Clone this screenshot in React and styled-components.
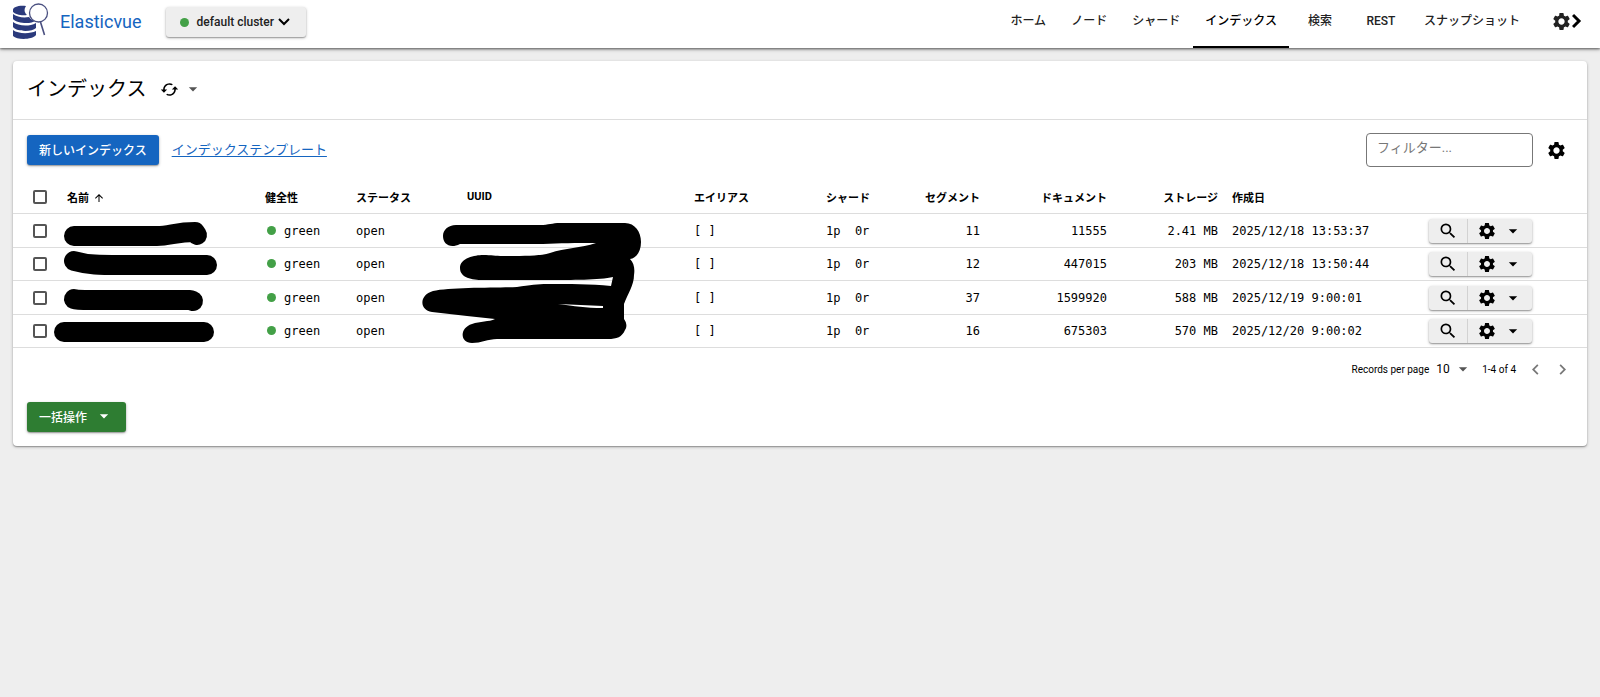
import React from "react";
import styled, { createGlobalStyle } from "styled-components";
import {
  MdArrowDropDown,
  MdArrowUpward,
  MdCached,
  MdChevronLeft,
  MdChevronRight,
  MdSearch,
  MdSettings,
} from "react-icons/md";

const GlobalStyle = createGlobalStyle`
  * {
    box-sizing: border-box;
  }

  body {
    margin: 0;
    background-color: #eeeeee;
    color: #000;
    font-family: Roboto, "Noto Sans CJK JP", sans-serif;
    font-size: 13px;
  }

  button,
  input,
  select {
    font-family: inherit;
    color: inherit;
  }

  button {
    cursor: pointer;
  }
`;

const raised = "0 1px 3px rgba(0, 0, 0, 0.3), 0 1px 1px rgba(0, 0, 0, 0.2)";

const Header = styled.header`
  display: flex;
  align-items: center;
  height: 48px;
  padding: 0 18px 0 12px;
  background-color: #fff;
  box-shadow: 0 1px 4px rgba(0, 0, 0, 0.4), 0 1px 2px rgba(0, 0, 0, 0.4);
`;

const Brand = styled.a`
  display: flex;
  align-items: center;
  gap: 11px;
  height: 42px;
  align-self: flex-start;
  color: #1565c0;
  font-size: 18px;
  text-decoration: none;
`;

const ClusterButton = styled.button`
  display: flex;
  align-items: center;
  align-self: flex-start;
  width: 140px;
  height: 30px;
  margin: 7px 0 0 24px;
  padding: 0 14px;
  border: 0;
  border-radius: 3px;
  background-color: #eeeeee;
  box-shadow: ${raised};
  color: #222;
  font-size: 12px;
  font-weight: 500;
  white-space: nowrap;

  svg {
    flex: none;
    margin-left: 4px;
  }
`;

const Dot = styled.span`
  display: inline-block;
  flex: none;
  width: 9px;
  height: 9px;
  margin-right: 8px;
  border-radius: 50%;
  background-color: #43a047;
`;

const Nav = styled.nav`
  display: flex;
  gap: 1px;
  height: 48px;
  margin-left: auto;
`;

const NavLink = styled.a`
  display: flex;
  justify-content: center;
  min-width: 60px;
  padding: 0 12px;
  border-bottom: 2px solid ${(p) => (p.$active ? "#000" : "transparent")};
  color: ${(p) => (p.$active ? "#000" : "#222")};
  font-size: 12px;
  font-weight: 500;
  line-height: 42px;
  text-decoration: none;
  white-space: nowrap;
`;

const IconButton = styled.button`
  display: inline-flex;
  align-items: center;
  padding: 0;
  border: 0;
  background-color: transparent;
  font-size: ${(p) => p.$size || 20}px;
  color: ${(p) => p.$color || "#000"};
`;

const SettingsButton = styled(IconButton)`
  height: 42px;
  align-self: flex-start;
  margin-left: 19px;
`;

const Card = styled.main`
  margin: 13px;
  border-radius: 4px;
  background-color: #fff;
  box-shadow: ${raised};
`;

const CardHeader = styled.div`
  display: flex;
  align-items: center;
  height: 59px;
  padding: 0 14px 2px;
  border-bottom: 1px solid #dddddd;
`;

const Title = styled.h1`
  margin: 0 14px 0 0;
  font-size: 20px;
  font-weight: 400;
  line-height: 28px;
`;

const ReloadControls = styled.div`
  display: flex;
  align-items: center;
  gap: 4px;
`;

const Toolbar = styled.div`
  display: flex;
  align-items: center;
  gap: 13px;
  padding: 13px 20px 13px 14px;
`;

const ActionButton = styled.button`
  display: flex;
  align-items: center;
  gap: 7px;
  height: 30px;
  padding: 0 12px 2px;
  border: 0;
  border-radius: 3px;
  background-color: ${(p) => p.$color};
  box-shadow: ${raised};
  color: #fff;
  font-size: 12px;
  font-weight: 500;
`;

const TemplateLink = styled.a`
  padding-bottom: 4px;
  color: #1565c0;
  text-underline-offset: 2px;
`;

const Filter = styled.input`
  width: 167px;
  height: 34px;
  margin-left: auto;
  padding: 0 10px 6px;
  border: 1px solid #777;
  border-radius: 4px;
  outline: 0;
  font-size: 13px;

  &::placeholder {
    color: #777;
    opacity: 1;
  }
`;

const TableWrap = styled.div`
  position: relative;
`;

const Table = styled.table`
  width: 100%;
  table-layout: fixed;
  border-collapse: separate;
  border-spacing: 0;
`;

const Th = styled.th`
  height: 34px;
  padding: 0 7px;
  border-bottom: 1px solid #dddddd;
  font-size: 11px;
  font-weight: 700;
  text-align: ${(p) => p.$align || "left"};
  white-space: nowrap;

  svg {
    margin-left: 4px;
    vertical-align: -2px;
  }
`;

const Row = styled.tr`
  height: 34px;

  &:nth-child(even) {
    height: 33px;
  }
`;

const Td = styled.td`
  padding: 0 7px;
  border-bottom: 1px solid #dddddd;
  font-family: "DejaVu Sans Mono", monospace;
  font-size: 12px;
  text-align: ${(p) => p.$align || "left"};
  white-space: pre;
`;

const Health = styled.span`
  padding-left: 2px;
`;

const Checkbox = styled.input`
  display: block;
  appearance: none;
  width: 14px;
  height: 14px;
  margin: 0 0 0 13px;
  border: 2px solid #555;
  border-radius: 2px;

  &:checked {
    background-color: #555;
  }
`;

const ButtonGroup = styled.div`
  display: inline-flex;
  height: 24px;
  border-radius: 3px;
  background-color: #eeeeee;
  box-shadow: ${raised};
  vertical-align: middle;
`;

const GroupButton = styled(IconButton)`
  justify-content: center;
  gap: 6px;
  width: ${(p) => p.$width}px;

  & + & {
    border-left: 1px solid #d2d2d2;
  }
`;

const Scribble = styled.svg`
  position: absolute;
  top: 0;
  left: 0;
  pointer-events: none;
`;

const Pagination = styled.div`
  display: flex;
  align-items: center;
  justify-content: flex-end;
  height: 42px;
  padding-right: 14px;
  font-size: 10px;
`;

const PageSize = styled.label`
  display: flex;
  align-items: center;
  margin-right: 9px;

  select {
    width: 17px;
    margin-left: 7px;
    padding: 0;
    border: 0;
    background-color: transparent;
    appearance: none;
    font-size: 12px;
  }
`;

const PageButtons = styled.div`
  display: flex;
  gap: 6px;
  margin-left: 9px;
`;

const CardFooter = styled.div`
  padding: 12px 14px 14px;
`;

const navItems = [
  "ホーム",
  "ノード",
  "シャード",
  "インデックス",
  "検索",
  "REST",
  "スナップショット",
];

const columns = [
  { label: "名前", width: 198, sorted: true },
  { label: "健全性", width: 91 },
  { label: "ステータス", width: 111 },
  { label: "UUID", width: 227 },
  { label: "エイリアス", width: 132 },
  { label: "シャード", width: 56 },
  { label: "セグメント", width: 112, align: "right" },
  { label: "ドキュメント", width: 127, align: "right" },
  { label: "ストレージ", width: 111, align: "right" },
  { label: "作成日", width: 197 },
];

const indices = [
  { segments: 11, docs: 11555, storage: "2.41 MB", created: "2025/12/18 13:53:37" },
  { segments: 12, docs: 447015, storage: "203 MB", created: "2025/12/18 13:50:44" },
  { segments: 37, docs: 1599920, storage: "588 MB", created: "2025/12/19 9:00:01" },
  { segments: 16, docs: 675303, storage: "570 MB", created: "2025/12/20 9:00:02" },
];

const Logo = () => (
  <svg width="37" height="38" viewBox="0 0 37 38" aria-hidden="true">
    <g fill="#2b3a7c">
      <path d="M1 8C1 5 7 3 14 4C12 7 12 10 15 13C9 14 3 12 1 10Z" />
      <path d="M1 12C5 15 11 16 17 15C19 18 21 18 23 19C20 22 5 22 1 17Z" />
      <path d="M1 20C6 24 17 25 24 21V26C20 30 5 30 1 25Z" />
      <path d="M1 28C6 32 18 32 24 29V33C20 38 5 38 1 34Z" />
    </g>
    <circle cx="26.500" cy="11" r="9" fill="#fff" stroke="#4a5080" strokeWidth="1.300" />
    <path d="M28.500 20L32.500 33" stroke="#4a5080" strokeWidth="1.600" />
  </svg>
);

const Chevron = ({ right }) => (
  <svg
    width={right ? 10 : 12}
    height={right ? 16 : 12}
    viewBox={right ? "0 0 10 16" : "0 0 12 12"}
    fill="none"
    stroke="#000"
    strokeWidth={right ? 3 : 2}
    aria-hidden="true"
  >
    <path d={right ? "M1 2L7 8L1 14" : "M1 3L6 8L11 3"} />
  </svg>
);

const Redaction = () => (
  <Scribble width="660" height="170" viewBox="13 179 660 170" aria-hidden="true">
    <g fill="none" stroke="#000" strokeWidth="20" strokeLinecap="round" strokeLinejoin="round">
      <path d="M74 235H157C170 235 176 231 195 231L197 234" />
      <path d="M74 260C88 264 100 264 120 264H207" />
      <path d="M74 298Q77 299 90 299H190L193 300" />
      <path d="M64 331H204" />
    </g>
    <path
      fillRule="evenodd"
      d="M443 235C443 229 448 224 456 224H540C549 224 552 222 560 222H625C635 222 641 231 641 241C641 250 637 257 630 258C634 262 635 268 634 274C634 284 628 292 624 303V318C627 322 627 326 625 329C622 336 617 338 608 338H497C488 338 481 342 472 342C460 342 459 327 472 323C480 320 489 321 495 318L467 315L432 311C419 309 419 294 433 290C450 286 495 287 517 286C530 284 538 283 547 283C570 283 590 283 611 285L613 276C600 279 570 279 550 279H483C472 279 460 277 460 267C460 257 475 254 483 254C492 254 495 255 503 255C525 255 540 255 550 252C565 247 581 247 596 242C575 242 560 242 543 243H460C450 248 443 243 443 235ZM558 303L603 305V307C585 307 575 305 558 303Z"
    />
  </Scribble>
);

const IndexRow = ({ index, number }) => (
  <Row>
    <Td>
      <Checkbox type="checkbox" aria-label={`row ${number}`} />
    </Td>
    <Td />
    <Td>
      <Health>
        <Dot />
        green
      </Health>
    </Td>
    <Td>open</Td>
    <Td />
    <Td>[ ]</Td>
    <Td>{"1p  0r"}</Td>
    <Td $align="right">{index.segments}</Td>
    <Td $align="right">{index.docs}</Td>
    <Td $align="right">{index.storage}</Td>
    <Td>{index.created}</Td>
    <Td>
      <ButtonGroup>
        <GroupButton $width={38} $size={20} aria-label="search">
          <MdSearch />
        </GroupButton>
        <GroupButton $width={65} $size={20} aria-label="options">
          <MdSettings />
          <MdArrowDropDown />
        </GroupButton>
      </ButtonGroup>
    </Td>
  </Row>
);

const App = () => {
  return (
    <>
      <GlobalStyle />
      <Header>
        <Brand href="#">
          <Logo />
          Elasticvue
        </Brand>
        <ClusterButton>
          <Dot />
          default cluster
          <Chevron />
        </ClusterButton>
        <Nav>
          {navItems.map((item) => (
            <NavLink key={item} href="#" $active={item === "インデックス"}>
              {item}
            </NavLink>
          ))}
        </Nav>
        <SettingsButton $size={21} $color="#222" aria-label="settings">
          <MdSettings />
          <Chevron right />
        </SettingsButton>
      </Header>

      <Card>
        <CardHeader>
          <Title>インデックス</Title>
          <ReloadControls>
            <IconButton $size={19} aria-label="reload">
              <MdCached />
            </IconButton>
            <IconButton $color="#555" aria-label="reload interval">
              <MdArrowDropDown />
            </IconButton>
          </ReloadControls>
        </CardHeader>

        <Toolbar>
          <ActionButton $color="#1565c0">新しいインデックス</ActionButton>
          <TemplateLink href="#">インデックステンプレート</TemplateLink>
          <Filter placeholder="フィルター..." aria-label="フィルター" />
          <IconButton $size={21} aria-label="table settings">
            <MdSettings />
          </IconButton>
        </Toolbar>

        <TableWrap>
          <Table>
            <colgroup>
              <col style={{ width: 47 }} />
              {columns.map((column) => (
                <col key={column.label} style={{ width: column.width }} />
              ))}
              <col style={{ width: 165 }} />
            </colgroup>
            <thead>
              <tr>
                <Th>
                  <Checkbox type="checkbox" aria-label="select all" />
                </Th>
                {columns.map((column) => (
                  <Th key={column.label} $align={column.align}>
                    {column.label}
                    {column.sorted && <MdArrowUpward size={12} />}
                  </Th>
                ))}
                <Th />
              </tr>
            </thead>
            <tbody>
              {indices.map((index, i) => (
                <IndexRow key={index.created} index={index} number={i + 1} />
              ))}
            </tbody>
          </Table>
          <Redaction />
        </TableWrap>

        <Pagination>
          <PageSize>
            Records per page
            <select defaultValue="10">
              <option>10</option>
              <option>20</option>
              <option>50</option>
            </select>
            <MdArrowDropDown size={20} color="#555" />
          </PageSize>
          1-4 of 4
          <PageButtons>
            <IconButton $size={21} $color="#777" aria-label="previous page">
              <MdChevronLeft />
            </IconButton>
            <IconButton $size={21} $color="#777" aria-label="next page">
              <MdChevronRight />
            </IconButton>
          </PageButtons>
        </Pagination>

        <CardFooter>
          <ActionButton $color="#2e7d32">
            一括操作
            <MdArrowDropDown size={20} />
          </ActionButton>
        </CardFooter>
      </Card>
    </>
  );
};

export default App;
